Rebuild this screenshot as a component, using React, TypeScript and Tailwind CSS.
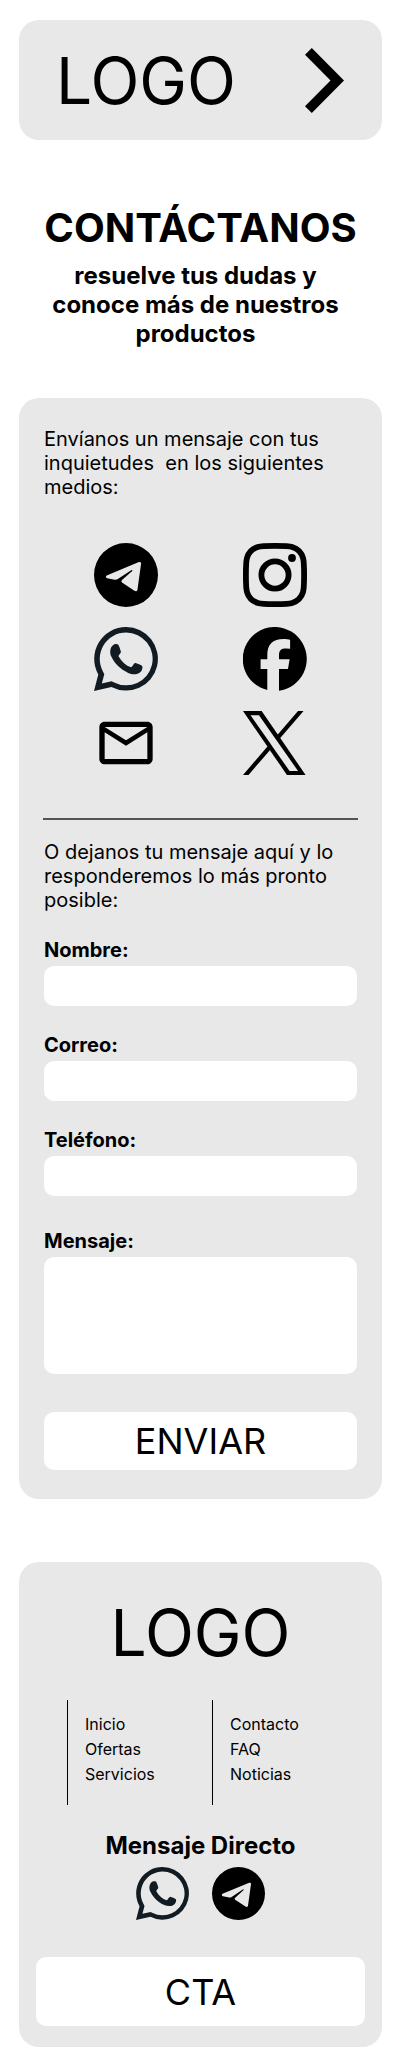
import React from 'react';

type IconProps = { className?: string };

const Chevron = ({ className }: IconProps) => (
  <svg viewBox="0 0 39 65" className={className} fill="currentColor" aria-hidden="true">
    <path d="M6.8 0 39 32.5 6.8 65 0 58.2 25.5 32.5 0 6.8Z" />
  </svg>
);

const Telegram = ({ className }: IconProps) => (
  <svg viewBox="0 0 64 64" className={className} fill="currentColor" aria-hidden="true">
    <path
      fillRule="evenodd"
      d="M32 0a32 32 0 1 1 0 64a32 32 0 0 1 0-64ZM12.7 32.4 44.9 19.1Q47.2 18.4 47.1 20.6L43.5 46.4Q42.9 49.2 40.4 47.8L28 39.6Q26.6 38.5 28 37L38.2 27.9Q38.8 26.9 37.6 27L24.2 35.8Q22.6 37 20.6 36.8L13.2 35.2Q10.8 33.9 12.7 32.4Z"
    />
  </svg>
);

const Whatsapp = ({ className }: IconProps) => (
  <svg viewBox="0 0 64 64" className={className} fill="currentColor" aria-hidden="true">
    <path
      fillRule="evenodd"
      d="M32.2 0A31.8 31.8 0 1 1 17.4 60L0 64 4.3 47.4A31.8 31.8 0 0 1 32.2 0ZM32.2 5.5A26.4 26.4 0 0 0 8.8 44.2L10.3 47.2 7.8 56.4 17.6 54.2 20.2 55.4A26.4 26.4 0 1 0 32.2 5.5Z"
    />
    <path d="M20 17.4C21.4 16.9 23.2 17 24.1 17.6C25.3 19.4 26.1 22.4 26.9 24.6C27.2 26.4 24.7 27.6 24.5 29.2C27.6 34.8 32 38.6 37 40.3C38.5 40 39.4 36.5 41.2 36C43.6 36.5 46.5 37.6 48.2 38.9C48.9 40.7 48.1 43.3 46.5 44.9C43.5 47.8 38.2 47.7 34.2 45.9C26.4 42.4 20.2 36.4 16.8 28.6C15.6 24.2 16.2 19.4 20 17.4Z" />
  </svg>
);

const Instagram = ({ className }: IconProps) => (
  <svg viewBox="0 0 64 64" className={className} fill="none" stroke="currentColor" aria-hidden="true">
    <path
      strokeWidth="5.8"
      d="M32 2.9C44 2.9 46.4 3 49.2 3.9Q57.5 6.5 60 14.8C61 18 61.1 20 61.1 32S61 46 60 49.2Q57.5 57.5 49.2 60C46.4 61 44 61.1 32 61.1S18 61 14.8 60Q6.5 57.5 4 49.2C3 46 2.9 44 2.9 32S3 18 4 14.8Q6.5 6.5 14.8 4C18 3 20 2.9 32 2.9Z"
    />
    <circle cx="32" cy="32" r="13.6" strokeWidth="5.8" />
    <circle cx="49" cy="15" r="3.9" fill="currentColor" stroke="none" />
  </svg>
);

const Facebook = ({ className }: IconProps) => (
  <svg viewBox="0 0 64 64" className={className} fill="currentColor" aria-hidden="true">
    <path d="M24.3 63.1A32 32 0 1 1 36 63.7V41.9H45L46.6 32.3H36V28.5C36 23.2 38 21.5 43.2 21.5Q45.8 21.5 47.1 21.8V12.8C45.8 12.4 42.5 12 40.6 12C29.7 12 24.3 17.2 24.3 28.3V32.3H17.6V41.9H24.3Z" />
  </svg>
);

const Mail = ({ className }: IconProps) => (
  <svg viewBox="0 0 24 24" className={className} fill="currentColor" aria-hidden="true">
    <path d="M22 6c0-1.1-.9-2-2-2H4c-1.1 0-2 .9-2 2v12c0 1.1.9 2 2 2h16c1.1 0 2-.9 2-2V6zm-2 0-8 5-8-5h16zm0 12H4V8l8 5 8-5v10z" />
  </svg>
);

const XLogo = ({ className }: IconProps) => (
  <svg viewBox="0 0 1227 1227" className={className} fill="currentColor" aria-hidden="true">
    <path d="M714.163 519.284 1160.89 0H1055.03L667.137 450.887 357.328 0H0L468.492 681.821 0 1226.37H105.866L515.491 750.218 842.672 1226.37H1200L714.137 519.284ZM569.165 687.828 521.697 619.934 144.011 79.694H306.615L611.412 515.685 658.88 583.579 1055.08 1150.3H892.476L569.165 687.854Z" />
  </svg>
);

const channels = [
  { name: 'Telegram', Icon: Telegram, tone: 'text-black' },
  { name: 'Instagram', Icon: Instagram, tone: 'text-black' },
  { name: 'WhatsApp', Icon: Whatsapp, tone: 'text-[#111b21]' },
  { name: 'Facebook', Icon: Facebook, tone: 'text-black' },
  { name: 'Correo', Icon: Mail, tone: 'text-black' },
  { name: 'X', Icon: XLogo, tone: 'text-black' },
];

const fields = [
  { id: 'nombre', label: 'Nombre:', type: 'text' },
  { id: 'correo', label: 'Correo:', type: 'email' },
  { id: 'telefono', label: 'Teléfono:', type: 'tel' },
];

const menus = [
  ['Inicio', 'Ofertas', 'Servicios'],
  ['Contacto', 'FAQ', 'Noticias'],
];

export default function App() {
  return (
    <div className="bg-white pt-5 pr-5 pb-[19px] pl-[19px] font-['Inter',sans-serif] text-black">
      <header className="flex h-[120px] items-center justify-between rounded-[20px] bg-[#e8e8e8] pr-[38px] pl-[37px]">
        <a href="#inicio" className="text-[64px] leading-[77px]">LOGO</a>
        <button type="button" aria-label="Abrir menú">
          <Chevron className="h-[65px] w-[39px]" />
        </button>
      </header>

      <main>
        <div className="mt-16 text-center">
          <h1 className="text-[40px] leading-[48px] font-bold">CONTÁCTANOS</h1>
          <p className="mt-[9px] pr-[10px] text-[24px] leading-[29px] font-bold">
            resuelve tus dudas y<br />conoce más de nuestros<br />productos
          </p>
        </div>

        <section className="mt-[50px] rounded-[20px] bg-[#e8e8e8] px-[25px] pt-[29px] pb-[29px]">
          <p className="text-[20px] leading-[24px] whitespace-pre-wrap">
            {'Envíanos un mensaje con tus inquietudes  en los siguientes medios:'}
          </p>
          <div className="mt-[44px] grid grid-cols-[64px_64px] justify-center gap-x-[85px] gap-y-5">
            {channels.map(({ name, Icon, tone }) => (
              <a key={name} href={`#${name.toLowerCase()}`} aria-label={name} className={tone}>
                <Icon className="size-16" />
              </a>
            ))}
          </div>
          <hr className="-mx-px mt-[43px] border-t-2 border-[#555555]" />
          <p className="mt-5 text-[20px] leading-[24px]">
            O dejanos tu mensaje aquí y lo responderemos lo más pronto posible:
          </p>

          <form className="mt-[26px]" onSubmit={(e) => e.preventDefault()}>
            <div className="flex flex-col gap-[27px]">
              {fields.map((f) => (
                <div key={f.id} className="flex flex-col gap-1">
                  <label htmlFor={f.id} className="text-[20px] leading-[24px] font-bold">{f.label}</label>
                  <input id={f.id} type={f.type} className="h-10 w-full rounded-[10px] bg-white px-3" />
                </div>
              ))}
            </div>
            <div className="mt-[33px] flex flex-col gap-1">
              <label htmlFor="mensaje" className="text-[20px] leading-[24px] font-bold">Mensaje:</label>
              <textarea id="mensaje" className="h-[117px] w-full resize-none rounded-[10px] bg-white p-3" />
            </div>
            <button type="submit" className="mt-[38px] h-[58px] w-full rounded-[10px] bg-white text-[36px] leading-[44px]">
              ENVIAR
            </button>
          </form>
        </section>
      </main>

      <footer className="mt-[63px] rounded-[20px] bg-[#e8e8e8] pt-8 pb-[21px]">
        <p className="text-center text-[64px] leading-[77px]">LOGO</p>
        <nav className="mt-[29px] grid grid-cols-2 pr-[25px] pl-12">
          {menus.map((items) => (
            <ul key={items[0]} className="h-[105px] border-l border-black pt-3 pl-[17px] text-[16px] leading-[25px]">
              {items.map((item) => (
                <li key={item}>
                  <a href={`#${item.toLowerCase()}`}>{item}</a>
                </li>
              ))}
            </ul>
          ))}
        </nav>
        <h2 className="mt-[26px] text-center text-[24px] leading-[29px] font-bold">Mensaje Directo</h2>
        <div className="mt-[7px] flex justify-center gap-[23px]">
          <a href="#whatsapp" aria-label="WhatsApp" className="text-[#111b21]">
            <Whatsapp className="size-[53px]" />
          </a>
          <a href="#telegram" aria-label="Telegram">
            <Telegram className="size-[53px]" />
          </a>
        </div>
        <div className="mt-[37px] px-[17px]">
          <button type="button" className="h-[69px] w-full rounded-[10px] bg-white text-[36px] leading-[44px]">
            CTA
          </button>
        </div>
      </footer>
    </div>
  );
}
